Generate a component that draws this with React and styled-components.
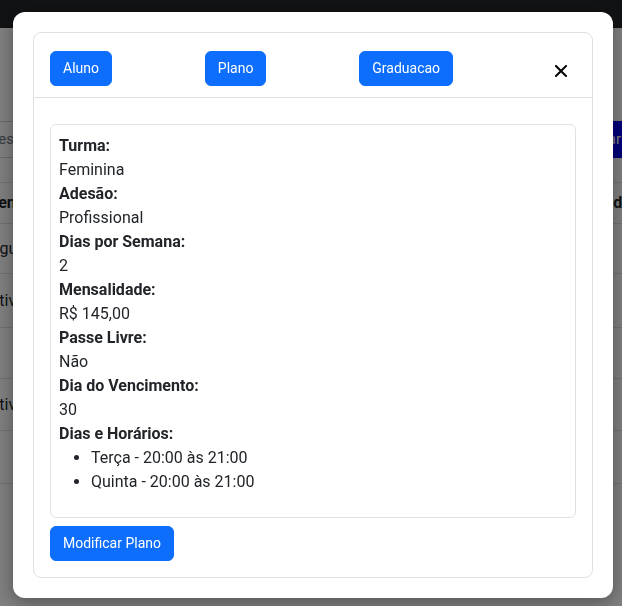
import React from "react";
import styled, { createGlobalStyle } from "styled-components";

const GlobalStyle = createGlobalStyle`
  html, body { margin: 0; padding: 0; }
  body {
    font-family: Roboto, "Noto Sans", Arial, sans-serif;
    font-size: 16px;
    line-height: 1.5;
    color: #212529;
    background: #fff;
    overflow: hidden;
  }
  * { box-sizing: border-box; }
`;

/* ---------- background page (under the backdrop) ---------- */
const Page = styled.div`
  min-height: 606px;
  background: #fff;
`;

const Navbar = styled.div`
  height: 28px;
  background: #212529;
`;

const BgContent = styled.div`
  margin-left: -11px;
  width: calc(100% + 22px);
  padding-top: 93px;
`;

const SearchRow = styled.div`
  display: flex;
  justify-content: space-between;
  align-items: stretch;
  height: 37px;
`;

const SearchInput = styled.div`
  width: 300px;
  border-top: 1px solid #ced4da;
  border-bottom: 1px solid #ced4da;
  color: #6c757d;
  font-size: 15px;
  line-height: 35px;
`;

const BgButton = styled.div`
  width: 120px;
  background: #0000f0;
  color: #fff;
  font-size: 15px;
  line-height: 37px;
  text-align: right;
  padding-right: 12px;
`;

const BgTable = styled.div`
  margin-top: 24px;
  border-top: 1px solid #dee2e6;
`;

const BgRow = styled.div`
  display: flex;
  justify-content: space-between;
  align-items: center;
  height: ${(p) => p.$h}px;
  border-bottom: 1px solid #dee2e6;
  font-weight: ${(p) => (p.$head ? 700 : 400)};
  padding-right: 2px;
`;

const BgCell = styled.span`
  white-space: nowrap;
`;

/* ---------- modal ---------- */
const Backdrop = styled.div`
  position: fixed;
  inset: 0;
  background: rgba(0, 0, 0, 0.5);
  display: flex;
  align-items: flex-start;
  justify-content: flex-start;
  padding: 12px 0 0 13px;
`;

const Modal = styled.div`
  width: 600px;
  background: #fff;
  border-radius: 12px;
  padding: 20px;
  box-shadow: 0 4px 18px rgba(0, 0, 0, 0.35);
`;

const Card = styled.div`
  border: 1px solid #dee2e6;
  border-radius: 8px;
`;

const CardHeader = styled.div`
  display: flex;
  justify-content: space-between;
  align-items: flex-start;
  padding: 18px 16px 11px;
  border-bottom: 1px solid #dee2e6;
`;

const CardBody = styled.div`
  padding: 26px 16px 16px;
`;

const Button = styled.button`
  font-family: Roboto, "Noto Sans", Arial, sans-serif;
  font-size: 14px;
  line-height: 1.5;
  font-weight: 400;
  color: #fff;
  background: #0d6efd;
  border: 1px solid #0d6efd;
  border-radius: 6px;
  padding: 6px 12px;
  cursor: pointer;
`;

const CloseButton = styled.button`
  width: 30px;
  height: 35px;
  padding: 5px 0 0;
  border: 0;
  background: transparent;
  display: flex;
  align-items: center;
  justify-content: center;
  cursor: pointer;
`;

const InfoBox = styled.div`
  border: 1px solid #dee2e6;
  border-radius: 6px;
  padding: 9px 8px 7px 8px;
`;

const Label = styled.div`
  font-weight: 700;
`;

const Value = styled.div``;

const List = styled.ul`
  margin: 0 0 16px;
  padding-left: 32px;
`;

const Actions = styled.div`
  margin-top: 8px;
  display: flex;
`;

const fields = [
  ["Turma:", "Feminina"],
  ["Adesão:", "Profissional"],
  ["Dias por Semana:", "2"],
  ["Mensalidade:", "R$ 145,00"],
  ["Passe Livre:", "Não"],
  ["Dia do Vencimento:", "30"],
];

const horarios = ["Terça - 20:00 às 21:00", "Quinta - 20:00 às 21:00"];

const bgRows = [
  { h: 41, head: true, l: "Tendência", r: "Modalidade" },
  { h: 50, l: "Aguardando", r: "" },
  { h: 54, l: "Ativo", r: "" },
  { h: 51, l: "", r: "" },
  { h: 52, l: "Ativo", r: "" },
  { h: 53, l: "", r: "" },
];

function CloseIcon() {
  return (
    <svg width="12" height="12" viewBox="0 0 12 12" aria-hidden="true">
      <path d="M1 1 L11 11 M11 1 L1 11" stroke="#000" strokeWidth="2" strokeLinecap="square" />
    </svg>
  );
}

export default function App() {
  return (
    <>
      <GlobalStyle />
      <Page>
        <Navbar />
        <BgContent>
          <SearchRow>
            <SearchInput>Pesquisar</SearchInput>
            <BgButton>Cadastrar</BgButton>
          </SearchRow>
          <BgTable>
            {bgRows.map((r, i) => (
              <BgRow key={i} $h={r.h} $head={r.head}>
                <BgCell>{r.l}</BgCell>
                <BgCell>{r.r}</BgCell>
              </BgRow>
            ))}
          </BgTable>
        </BgContent>
      </Page>

      <Backdrop>
        <Modal>
          <Card>
            <CardHeader>
              <Button>Aluno</Button>
              <Button>Plano</Button>
              <Button>Graduacao</Button>
              <CloseButton aria-label="Fechar">
                <CloseIcon />
              </CloseButton>
            </CardHeader>
            <CardBody>
              <InfoBox>
                {fields.map(([l, v]) => (
                  <React.Fragment key={l}>
                    <Label>{l}</Label>
                    <Value>{v}</Value>
                  </React.Fragment>
                ))}
                <Label>Dias e Horários:</Label>
                <List>
                  {horarios.map((h) => (
                    <li key={h}>{h}</li>
                  ))}
                </List>
              </InfoBox>
              <Actions>
                <Button>Modificar Plano</Button>
              </Actions>
            </CardBody>
          </Card>
        </Modal>
      </Backdrop>
    </>
  );
}
